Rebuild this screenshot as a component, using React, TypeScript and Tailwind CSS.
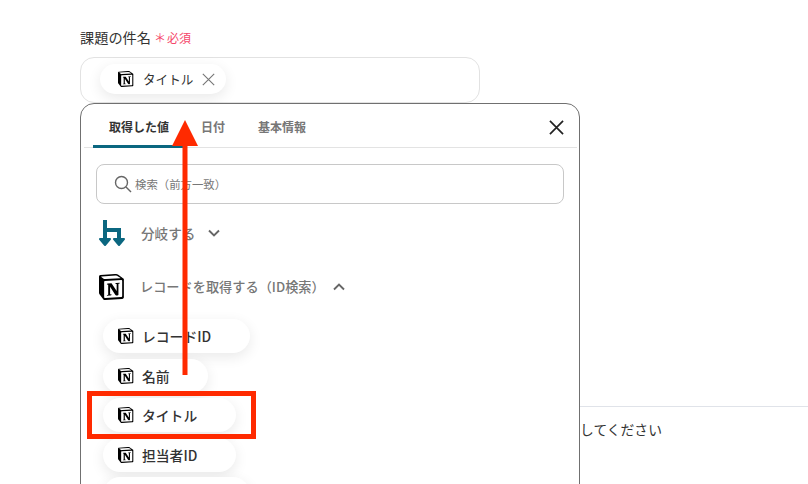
const NotionIcon = ({ size }: { size: number }) => (
  <svg width={size} height={size} viewBox="0 0 100 100" className="shrink-0">
    <path
      fill="#fff"
      d="M6.017 4.313l55.333 -4.087c6.797 -0.583 8.543 -0.19 12.817 2.917l17.663 12.443c2.913 2.14 3.883 2.723 3.883 5.053v68.243c0 4.277 -1.553 6.807 -6.99 7.193L24.467 99.967c-4.08 0.193 -6.023 -0.39 -8.16 -3.113L3.3 79.94c-2.333 -3.113 -3.3 -5.443 -3.3 -8.167V11.113c0 -3.497 1.553 -6.413 6.017 -6.8z"
    />
    <path
      fill="#000"
      fillRule="evenodd"
      d="M61.35 0.227l-55.333 4.087C1.553 4.7 0 7.617 0 11.113v60.66c0 2.723 0.967 5.053 3.3 8.167l13.007 16.913c2.137 2.723 4.08 3.307 8.16 3.113l64.257 -3.89c5.433 -0.387 6.99 -2.917 6.99 -7.193V20.64c0 -2.21 -0.873 -2.847 -3.443 -4.733L74.167 3.143c-4.273 -3.107 -6.02 -3.5 -12.817 -2.917zM25.92 19.523c-5.247 0.353 -6.437 0.433 -9.417 -1.99L8.927 11.507c-0.77 -0.78 -0.383 -1.753 1.557 -1.947l53.193 -3.887c4.467 -0.39 6.793 1.167 8.54 2.527l9.123 6.61c0.39 0.197 1.36 1.36 0.193 1.36l-54.933 3.307 -0.68 0.047zM19.803 88.3V30.367c0 -2.53 0.777 -3.697 3.103 -3.893L86 22.78c2.14 -0.193 3.107 1.167 3.107 3.693v57.547c0 2.53 -0.39 4.67 -3.883 4.863l-60.377 3.5c-3.493 0.193 -5.043 -0.97 -5.043 -4.083zm59.6 -54.827c0.387 1.75 0 3.5 -1.75 3.7l-2.91 0.577v42.773c-2.527 1.36 -4.853 2.137 -6.797 2.137 -3.107 0 -3.883 -0.973 -6.21 -3.887l-19.03 -29.94v28.967l6.02 1.363s0 3.5 -4.857 3.5l-13.39 0.777c-0.39 -0.78 0 -2.723 1.357 -3.11l3.497 -0.97v-38.3L30.48 40.667c-0.39 -1.75 0.58 -4.277 3.3 -4.473l14.367 -0.967 19.8 30.327v-26.83l-5.047 -0.58c-0.39 -2.143 1.163 -3.7 3.103 -3.89l13.4 -0.78z"
    />
  </svg>
);

const BranchIcon = () => (
  <svg width="26" height="28" viewBox="0 0 26 28" className="shrink-0">
    <path d="M6 1v19M6 11H20V20" fill="none" stroke="#0b6780" strokeWidth="4" />
    <path d="M1 20H11L6 26Z M15 20H25L20 26Z" fill="#0b6780" stroke="#0b6780" strokeWidth="2" strokeLinejoin="round" />
  </svg>
);

const Chevron = ({ up }: { up?: boolean }) => (
  <svg width="12" height="8" viewBox="0 0 12 8" className="shrink-0">
    <path d={up ? "M1 6.5L6 1.5l5 5" : "M1 1.5L6 6.5l5-5"} fill="none" stroke="#666" strokeWidth="1.9" />
  </svg>
);

const Cross = ({ size, color, width }: { size: number; color: string; width: number }) => (
  <svg width={size} height={size} viewBox="0 0 16 16" className="shrink-0">
    <path d="M1 1l14 14M15 1L1 15" fill="none" stroke={color} strokeWidth={width} />
  </svg>
);

const ValueChip = ({ label, width }: { label: string; width: string }) => (
  <div className={`flex h-[34px] items-center gap-[8px] rounded-full bg-white pl-[15px] shadow-[0_4px_14px_rgba(0,0,0,0.09)] ${width}`}>
    <NotionIcon size={16} />
    <span className="text-[13.8px] leading-[20px] font-medium text-[#333]">{label}</span>
  </div>
);

export default function App() {
  return (
    <div
      className="relative h-[484px] w-[808px] overflow-hidden bg-white pt-[28px] pl-[80px] text-[#333]"
      style={{ fontFamily: '"Noto Sans CJK JP", "Noto Sans", sans-serif' }}
    >
      <div className="flex h-[19px] items-center">
        <span className="text-[14.2px] leading-[19px] text-[#333]">課題の件名</span>
        <span className="ml-[3px] text-[12px] leading-[19px] text-[#f5476a]">＊</span>
        <span className="ml-[1px] text-[12px] leading-[19px] text-[#f5476a]">必須</span>
      </div>
      <div className="mt-[10px] flex h-[46px] w-[400px] items-start rounded-[14px] border border-[#e2e2e2] bg-white pt-[6px] pl-[19px]">
        <div className="flex h-[30px] w-[126px] items-center rounded-full bg-white pl-[18px] shadow-[0_4px_14px_rgba(0,0,0,0.09)]">
          <NotionIcon size={16} />
          <span className="ml-[9px] text-[12.6px] text-[#333]">タイトル</span>
          <span className="ml-[9px]">
            <Cross size={13} color="#777" width={1.4} />
          </span>
        </div>
      </div>

      {/* text behind the popover */}
      <div className="mt-[303px] w-[728px] border-t border-[#e0e3e9] pt-[12px] pl-[500px] text-[13.8px] leading-[20px] text-[#333]">
        してください
      </div>

      {/* value picker popover */}
      <div className="absolute top-[103px] left-[80px] h-[400px] w-[500px] rounded-t-[14px] border border-[#707070] bg-white">
        <div className="relative mx-[3px] flex h-[44px] w-[493px] items-start border-b border-[#e3e3e3] pl-[9px] text-[12px] leading-[46px] font-semibold text-[#777]">
          <div className="h-[44px] w-[91px] rounded-t-[3px] border-b-[3px] border-[#0b6780] pl-[16px] text-[#333]">取得した値</div>
          <div className="ml-[17px] w-[57px]">日付</div>
          <div>基本情報</div>
          <span className="absolute top-[16px] right-[13px]">
            <Cross size={15} color="#222" width={1.8} />
          </span>
        </div>

        <div className="mx-[15px] mt-[16px] flex h-[40px] w-[468px] items-center rounded-[8px] border border-[#c8c8c8] pl-[17px]">
          <svg width="18" height="18" viewBox="0 0 18 18" className="shrink-0">
            <circle cx="7.5" cy="7.5" r="6" fill="none" stroke="#666" strokeWidth="1.4" />
            <path d="M12 12l5 5" stroke="#666" strokeWidth="1.4" />
          </svg>
          <span className="mt-[1px] ml-[3px] text-[11.4px] text-[#777]">検索（前方一致）</span>
        </div>

        <div className="mt-[14px] ml-[18px] flex h-[30px] items-center">
          <BranchIcon />
          <span className="ml-[16px] text-[13.6px] font-medium text-[#777]">分岐する</span>
          <span className="ml-[13px]">
            <Chevron />
          </span>
        </div>

        <div className="mt-[24px] ml-[18px] flex h-[30px] items-center">
          <NotionIcon size={26} />
          <span className="ml-[15px] text-[13.2px] font-medium text-[#777]">レコードを取得する（ID検索）</span>
          <span className="ml-[8px]">
            <Chevron up />
          </span>
        </div>

        <div className="mt-[17px] ml-[22px] flex flex-col gap-[5.5px]">
          <ValueChip label="レコードID" width="w-[147px]" />
          <ValueChip label="名前" width="w-[105px]" />
          <ValueChip label="タイトル" width="w-[133px]" />
          <ValueChip label="担当者ID" width="w-[133px]" />
          <ValueChip label="" width="w-[147px]" />
        </div>
      </div>

      {/* annotation overlays */}
      <div className="absolute top-[391px] left-[87px] h-[48px] w-[169px] border-[5px] border-[#ff2a00]" />
      <svg width="30" height="260" viewBox="0 0 30 260" className="absolute top-[120px] left-[170px]">
        <path d="M15 0L28 26H2Z" fill="#ff2a00" />
        <rect x="12.5" y="24" width="5" height="231" fill="#ff2a00" />
      </svg>
    </div>
  );
}
